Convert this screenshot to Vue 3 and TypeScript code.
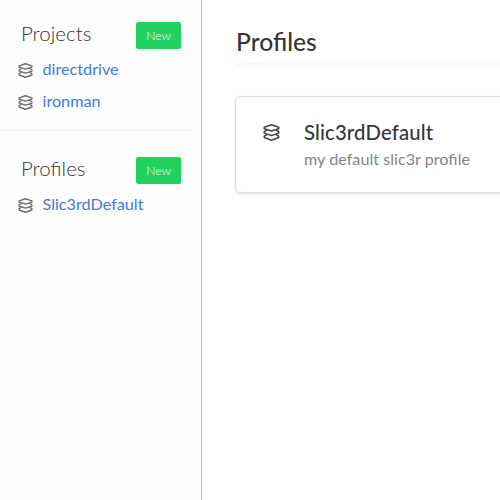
<script setup lang="ts">
import { h } from 'vue'

interface Entry {
  name: string
}
interface Section {
  key: string
  title: string
  entries: Entry[]
}

const sections: Section[] = [
  { key: 'projects', title: 'Projects', entries: [{ name: 'directdrive' }, { name: 'ironman' }] },
  { key: 'profiles', title: 'Profiles', entries: [{ name: 'Slic3rdDefault' }] },
]

const LayersIcon = () =>
  h('svg', { viewBox: '0 0 16 16', fill: 'none', stroke: 'currentColor', 'stroke-width': 1.45, 'stroke-linejoin': 'round', 'stroke-linecap': 'round' }, [
    h('path', { d: 'M8 .8 14.8 3v1.4L8 6.6 1.2 4.4V3Z' }),
    h('path', { d: 'M3.4 5.9 1.2 7.2v1.4L8 10.9l6.8-2.3V7.2l-2.2-1.3' }),
    h('path', { d: 'M3.4 10.1 1.2 11.4v1.4L8 15.2l6.8-2.4v-1.4l-2.2-1.3' }),
  ])
</script>

<template>
  <div class="page">
    <aside class="sidebar">
      <section v-for="s in sections" :key="s.key" class="group">
        <header class="group-head">
          <h2 class="group-title">{{ s.title }}</h2>
          <button class="new">New</button>
        </header>
        <ul>
          <li v-for="e in s.entries" :key="e.name">
            <LayersIcon class="icon" />
            <a class="link">{{ e.name }}</a>
          </li>
        </ul>
      </section>
    </aside>
    <main class="main">
      <h1>Profiles</h1>
      <article class="card">
        <LayersIcon class="card-icon" />
        <div class="card-text">
          <h3>Slic3rdDefault</h3>
          <p>my default slic3r profile</p>
        </div>
      </article>
    </main>
  </div>
</template>

<style>
body {
  overflow: hidden;
  background: #fff;
}
</style>

<style scoped>
.page {
  display: flex;
  width: 500px;
  height: 500px;
  overflow: hidden;
  font-family: Lato, "Open Sans", sans-serif;
  color: #363636;
}
.sidebar {
  box-sizing: border-box;
  flex: none;
  width: 202px;
  padding-right: 8px;
  background: #fdfdfd;
  border-right: 1px solid #c2c2c2;
}
.group {
  box-sizing: border-box;
  height: 131px;
  padding-top: 22px;
  border-bottom: 2px solid #f5f5f5;
}
.group:last-child {
  padding-top: 26px;
  border: 0;
}
.group-head {
  display: flex;
  align-items: flex-start;
  justify-content: space-between;
  height: 27px;
  padding: 0 12px 0 21px;
}
h1, h2, h3, p, ul {
  margin: 0;
  padding: 0;
}
.group-title {
  font-size: 20.5px;
  font-weight: 300;
  line-height: 23px;
}
.new {
  width: 45px;
  height: 27px;
  padding: 0;
  border: 0;
  border-radius: 2px;
  background: #23d160;
  color: #fff;
  font: 300 12.2px/27px Lato, sans-serif;
}
ul {
  list-style: none;
  padding-top: 5px;
}
li {
  display: flex;
  align-items: center;
  height: 32px;
  padding-left: 18px;
}
.icon {
  width: 15px;
  height: 15px;
  color: #6c6c6c;
}
.link {
  margin-left: 9.5px;
  padding-bottom: 2px;
  font-size: 16.2px;
  line-height: 24px;
  color: #3f7bdf;
}
.main {
  box-sizing: border-box;
  flex: none;
  width: 700px;
  padding: 26px 0 0 34px;
}
h1 {
  box-sizing: border-box;
  height: 39px;
  border-bottom: 2px solid #f5f5f5;
  font-size: 24.6px;
  font-weight: 500;
  line-height: 32px;
}
.card {
  box-sizing: border-box;
  display: flex;
  height: 97px;
  margin-top: 31px;
  margin-left: -1px;
  padding: 22px 27px;
  border: 1px solid #dbdbdb;
  border-radius: 6px;
  box-shadow: 0 1px 3px rgba(0, 0, 0, 0.12);
}
.card-icon {
  flex: none;
  width: 17px;
  height: 17px;
  margin-top: 5px;
  color: #444;
}
.card-text {
  margin-left: 24px;
}
h3 {
  font-size: 20.3px;
  font-weight: 500;
  letter-spacing: 0.15px;
  line-height: 26px;
}
p {
  font-size: 16.2px;
  line-height: 28px;
  color: #858585;
}
</style>
